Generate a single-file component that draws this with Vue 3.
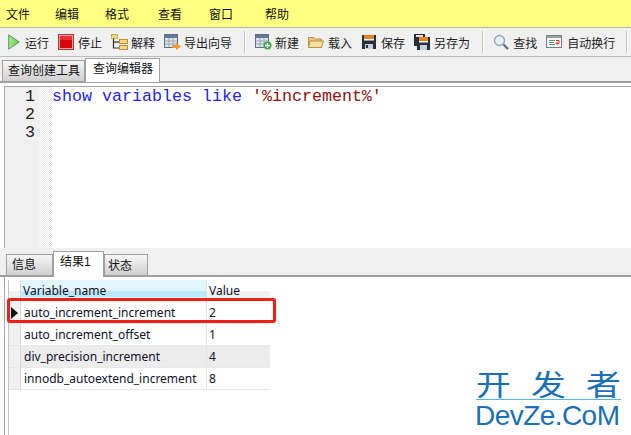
<script setup>
const menus = [
  { t: '文件', w: 49 }, { t: '编辑', w: 50 }, { t: '格式', w: 53 },
  { t: '查看', w: 51 }, { t: '窗口', w: 56 }, { t: '帮助', w: 40 }
]
const rows = [
  ['auto_increment_increment', '2'],
  ['auto_increment_offset', '1'],
  ['div_precision_increment', '4'],
  ['innodb_autoextend_increment', '8']
]
</script>

<template>
  <div class="app">
    <div class="menu">
      <span v-for="m in menus" :key="m.t" :style="{ width: m.w + 'px' }">{{ m.t }}</span>
    </div>
    <div class="toolbar">
      <div class="tool g5">
        <svg width="12" height="16" viewBox="0 0 12 16"><defs><linearGradient id="pl" x1="0" y1="0" x2="1" y2="0"><stop offset="0" stop-color="#a6e88a"/><stop offset="1" stop-color="#62c850"/></linearGradient></defs><path d="M.7 .8 L11.300 8 L.7 15.200 Z" fill="url(#pl)" stroke="#5a9c68" stroke-width="1"/></svg>
        <span>运行</span>
      </div>
      <div class="tool">
        <svg width="16" height="16" viewBox="0 0 16 16"><rect x=".5" y=".5" width="15" height="15" fill="#e8a0a0" stroke="#a83838"/><rect x="2" y="2" width="12" height="12" fill="#d40808"/><rect x="2" y="2" width="12" height="4" fill="#e83030"/></svg>
        <span>停止</span>
      </div>
      <div class="tool g3">
        <svg width="17" height="16" viewBox="0 0 17 16"><path d="M2.500 4V14H8" fill="none" stroke="#333" stroke-width="1.200"/><path d="M2.500 8H8" stroke="#333" stroke-width="1.200"/><rect x=".5" y=".5" width="6" height="4" fill="#f7d97a" stroke="#b8923a" stroke-dasharray="2 1"/><rect x="8.500" y="5.500" width="8" height="4" fill="#f7d97a" stroke="#b8923a"/><rect x="8.500" y="11.500" width="8" height="4" fill="#f7d97a" stroke="#b8923a"/></svg>
        <span>解释</span>
      </div>
      <div class="tool g3">
        <svg width="17" height="16" viewBox="0 0 17 16"><rect x=".5" y=".5" width="13" height="13" fill="#dfe6ee" stroke="#66707a"/><rect x="1" y="1" width="12" height="3" fill="#5d7b96"/><path d="M1 7H13M1 10H13M5 4V13M9 4V13" stroke="#9aa8b5"/><path d="M8 11H12V8.500L17 12.500L12 16V14H8Z" fill="#ef9a2e"/></svg>
        <span>导出向导</span>
      </div>
      <i class="sep sep1"></i>
      <div class="tool g3">
        <svg width="17" height="16" viewBox="0 0 17 16"><rect x=".5" y=".5" width="13" height="13" fill="#dfe6ee" stroke="#66707a"/><rect x="1" y="1" width="12" height="3" fill="#5d7b96"/><path d="M1 7H13M1 10H13M5 4V13M9 4V13" stroke="#9aa8b5"/><circle cx="12.500" cy="11.500" r="4" fill="#3eaa4c"/><path d="M12.500 9V14M10 11.500H15" stroke="#fff" stroke-width="1.300"/></svg>
        <span>新建</span>
      </div>
      <div class="tool">
        <svg width="16" height="16" viewBox="0 0 16 16"><path d="M.5 3.500H6L7.500 5H13.500V13.500H.5Z" fill="#e8c476" stroke="#b59450"/><path d="M2 7H15.500L13.500 13.500H.5Z" fill="#f6df9e" stroke="#b59450"/></svg>
        <span>载入</span>
      </div>
      <div class="tool">
        <svg width="16" height="16" viewBox="0 0 16 16"><rect x="1" y="1" width="14" height="14" fill="#25303c"/><rect x="3" y="1" width="10" height="4" fill="#f08020"/><rect x="3" y="5" width="10" height="1.500" fill="#fff"/><rect x="4" y="10" width="8" height="5" fill="#c9ced4"/><rect x="5" y="11" width="2" height="3" fill="#25303c"/></svg>
        <span>保存</span>
      </div>
      <div class="tool">
        <svg width="16" height="16" viewBox="0 0 16 16"><rect x="0" y="0" width="11" height="12" fill="#25303c"/><rect x="2" y="1" width="7" height="2" fill="#e0e0e0"/><rect x="3" y="3" width="13" height="13" fill="#25303c"/><rect x="5" y="3" width="9" height="4" fill="#f08020"/><rect x="5" y="7" width="9" height="1.500" fill="#fff"/><rect x="6" y="11" width="7" height="5" fill="#c9ced4"/></svg>
        <span>另存为</span>
      </div>
      <i class="sep sep2"></i>
      <div class="tool">
        <svg width="16" height="16" viewBox="0 0 16 16"><circle cx="6.500" cy="6.500" r="5" fill="#e4f0fa" stroke="#8fa9c0" stroke-width="1.400"/><path d="M10.500 10.500L15 15" stroke="#5a6b7c" stroke-width="2.200"/></svg>
        <span>查找</span>
      </div>
      <div class="tool g5">
        <svg width="16" height="14" viewBox="0 0 16 14"><rect x=".5" y=".5" width="15" height="12" fill="#f6f6f0" stroke="#77807a"/><rect x="1" y="1" width="14" height="2" fill="#9aa0a0"/><path d="M3 5.500H9M3 7.500H8M3 9.500H9" stroke="#5aa07a"/><path d="M10 5.500H13V8.500H10.500M11.500 7L10 8.500L11.500 10" fill="none" stroke="#d8342c"/></svg>
        <span>自动换行</span>
      </div>
      <i class="sep sep3"></i>
    </div>
    <div class="tabs top">
      <div class="tab">查询创建工具</div>
      <div class="tab active">查询编辑器</div>
    </div>
    <div class="editor">
      <div class="gutter"><div>1</div><div>2</div><div>3</div></div>
      <div class="fold"></div>
      <div class="code"><span class="kw">show variables like </span><span class="str">'%increment%'</span></div>
    </div>
    <div class="tabs bottom">
      <div class="tab info">信息</div>
      <div class="tab active">结果1</div>
      <div class="tab state">状态</div>
    </div>
    <div class="results">
      <div class="grid">
        <div class="grow head">
          <div class="ind"></div>
          <div class="c1">Variable_name</div>
          <div class="c2">Value</div>
        </div>
        <div v-for="(r, i) in rows" :key="r[0]" class="grow" :class="{ alt: i === 2 }">
          <div class="ind"><i v-if="i === 0" class="arrow"></i></div>
          <div class="c1">{{ r[0] }}</div>
          <div class="c2">{{ r[1] }}</div>
        </div>
      </div>
    </div>
    <div class="mark"></div>
    <div class="wm">
      <div class="wm-cn"><span>开</span><span>发</span><span>者</span></div>
      <div class="wm-en">DevZe.CoM</div>
    </div>
  </div>
</template>

<style>
html, body { margin: 0; background: #fff; overflow: hidden; }
</style>

<style scoped>
.app {
  position: relative;
  width: 631px;
  height: 435px;
  overflow: hidden;
  background: #fff;
  font: 12px "Liberation Sans", "Noto Sans CJK SC", sans-serif;
  color: #111;
}
.menu {
  height: 27px;
  background: #ffff80;
  border-bottom: 1px solid #b5b5b5;
  display: flex;
  align-items: center;
  padding-left: 6px;
}
.menu span { flex: none; }
.toolbar {
  height: 28px;
  background: #f0f0f0;
  border-bottom: 1px solid #bdbdbd;
  display: flex;
  align-items: center;
  padding-left: 8px;
  white-space: nowrap;
}
.tool { display: flex; align-items: center; gap: 4px; margin-right: 9px; flex: none; color: #222; }
.tool svg { flex: none; }
.g3 { gap: 3px; }
.g5 { gap: 5px; }
.sep { flex: none; width: 1px; height: 22px; background: #c4c4c4; border-right: 1px solid #fff; }
.sep1, .sep2 { margin: 0 9px 0 3px; }
.sep3 { margin-left: 2px; }
.tabs { display: flex; background: #f0f0f0; align-items: flex-end; }
.tabs.top { height: 24px; padding-left: 2px; border-bottom: 2px solid #a0a0a0; margin-bottom: 3px; }
.tab {
  height: 20px;
  line-height: 21px;
  padding: 0 4px 0 5px;
  border: 1px solid #a0a0a0;
  border-bottom: none;
  background: linear-gradient(#f6f6f6, #d0d0d0);
  flex: none;
}
.tab.active {
  height: 23px;
  line-height: 20px;
  background: #fff;
  margin-bottom: -1px;
  padding: 0 6px 0 7px;
  position: relative;
}
.editor {
  height: 161px;
  margin-left: 4px;
  border-left: 1px solid #a8a8a8;
  border-top: 1px solid #a8a8a8;
  display: flex;
  background: #fff;
  font: 16.670px/18px "Liberation Mono", monospace;
}
.gutter { width: 34px; background: #f0f0f0; text-align: right; padding: 1px 4px 0 0; box-sizing: border-box; color: #222; }
.fold {
  width: 13px;
  background-image: repeating-conic-gradient(#e8e8e8 0 25%, #fff 0 50%);
  background-size: 2px 2px;
}
.code { white-space: pre; padding-top: 1px; }
.kw { color: #2424f0; }
.str { color: #8c1010; }
.tabs.bottom { height: 29px; padding-left: 6px; border-bottom: 2px solid #a0a0a0; box-sizing: border-box; }
.tabs.bottom .tab { height: 20px; line-height: 21px; padding: 0; }
.tabs.bottom .info { padding-left: 5px; width: 40px; }
.tabs.bottom .state { padding-left: 3px; width: 39px; line-height: 22px; }
.tabs.bottom .tab.active { height: 25px; width: 43px; line-height: 21px; padding: 0 0 0 6px; margin-bottom: -2px; }
.results { height: 158px; border-left: 1px solid #a8a8a8; margin-left: 4px; padding: 3px 0 0 3px; box-sizing: border-box; background: #fff; position: relative; }
.results::before { content: ""; position: absolute; left: 3px; top: 3px; bottom: 0; width: 1px; background: #c4c4c4; }
.grid { width: 262px; font-family: "Noto Sans", "Liberation Sans", sans-serif; color: #10102a; }
.grow { display: flex; height: 22px; line-height: 21px; background: #fff; border-bottom: 1px solid #e8e8e8; box-sizing: border-box; }
.grow.alt { background: #ececec; }
.ind { width: 13px; box-sizing: border-box; background: #f0f0f0; border-right: 1px solid #d8d8d8; flex: none; display: flex; align-items: center; justify-content: center; }
.c1 { width: 186px; flex: none; padding-left: 3px; box-sizing: border-box; border-right: 1px solid #e4e4e4; }
.c2 { flex: 1; padding-left: 2px; }
.head { border-bottom: none; }
.head .ind { background: linear-gradient(#fff 0 11px, #f0f0f0 11px 17px, #fff 17px); }
.head .c1 { background: linear-gradient(#e2f5fd 0 11px, #bae7fb 11px 17px, #fff 17px); padding-left: 2px; }
.head .c2 { background: linear-gradient(#fff 0 11px, #f0f0f0 11px 17px, #fff 17px); }
.arrow { width: 0; height: 0; margin-left: 1px; border-left: 7px solid #111; border-top: 6px solid transparent; border-bottom: 6px solid transparent; }
.mark {
  position: absolute;
  left: 7px;
  top: 298px;
  width: 269px;
  height: 25px;
  box-sizing: border-box;
  border: 3px solid #f02018;
  border-radius: 3px;
}
.wm { position: absolute; left: 476px; top: 368px; width: 145px; color: #1a70b8; }
.wm-cn {
  display: flex;
  justify-content: space-between;
  font: 29px/30px "Noto Sans CJK SC", sans-serif;
  height: 31px;
  border-bottom: 1px solid #50b8ee;
  padding: 0 3px 0 3px;
}
.wm-cn span { display: inline-block; transform: scaleX(1.2); }
.wm-en { font: 28px/31px "Liberation Sans", sans-serif; letter-spacing: -.55px; white-space: nowrap; margin-left: -1px; }
</style>
